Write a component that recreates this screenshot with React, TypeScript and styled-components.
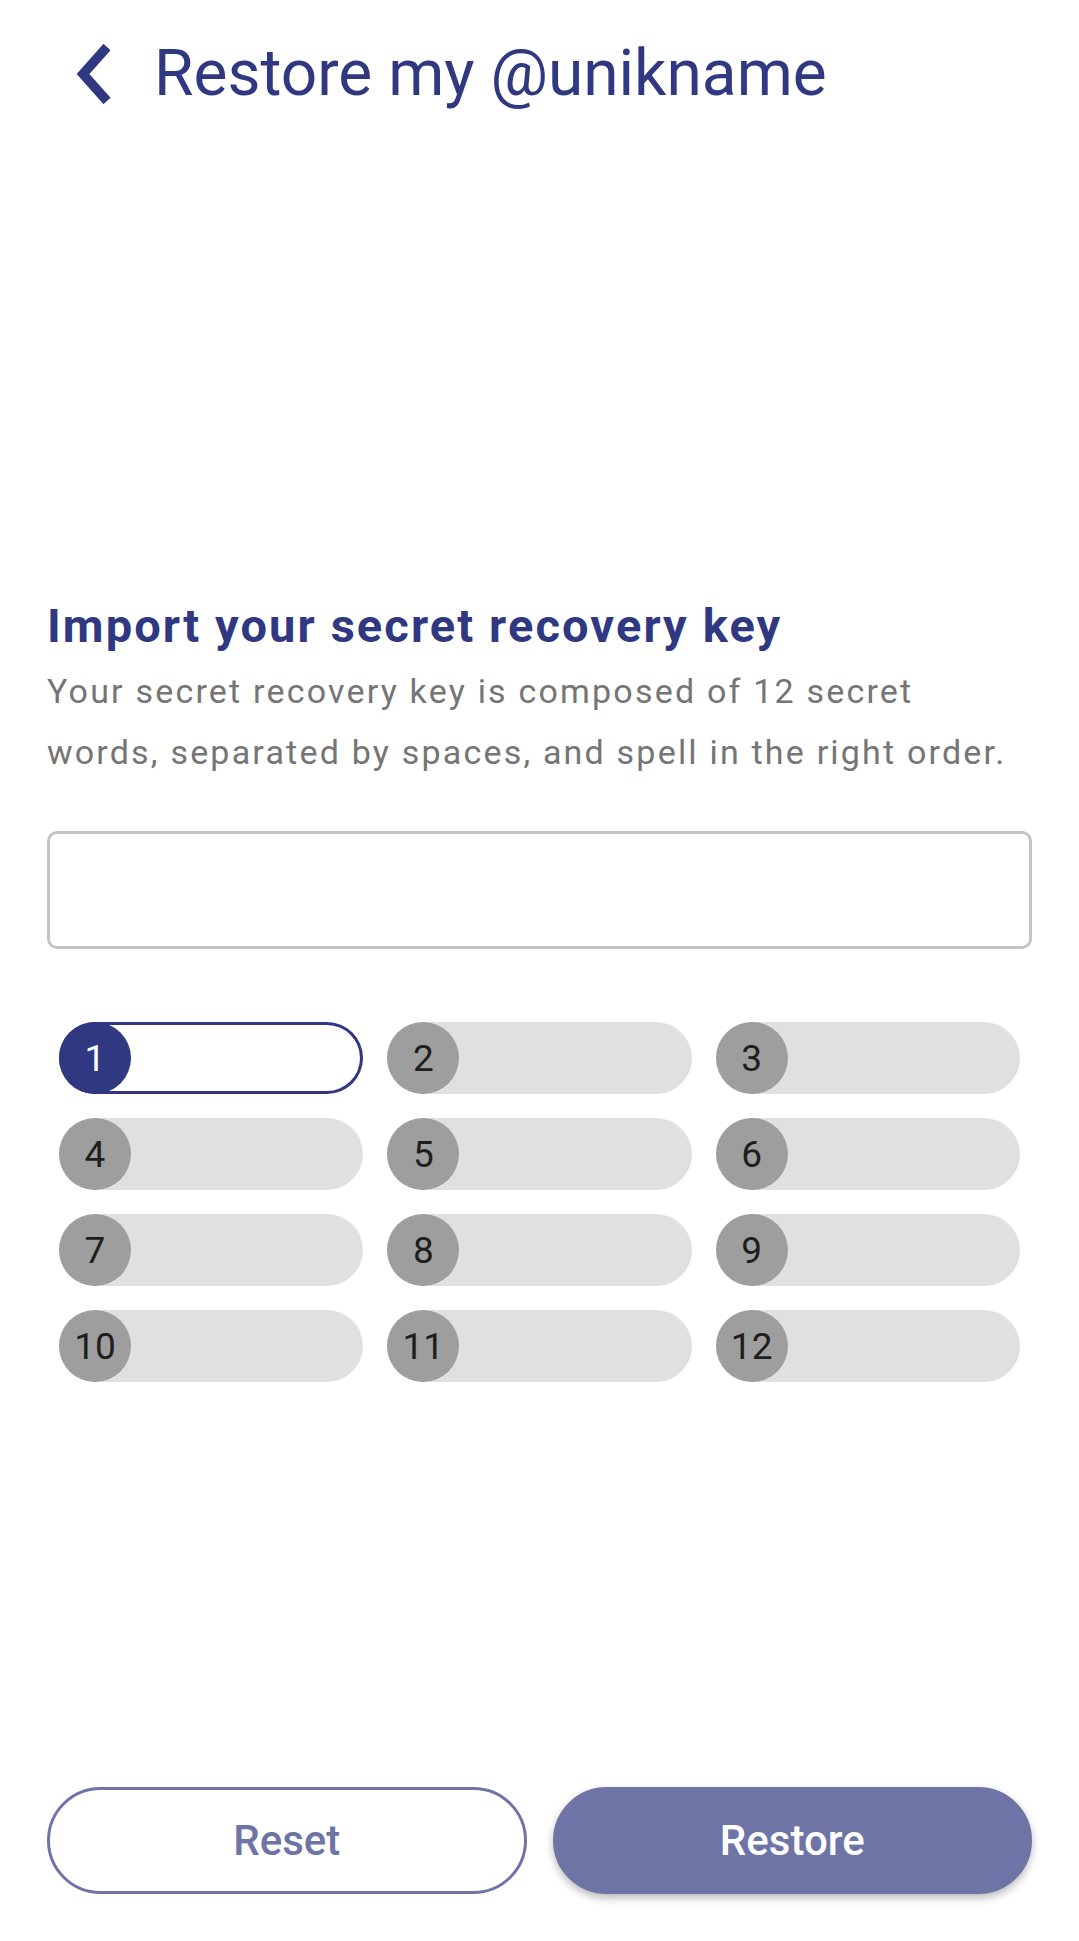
import React from "react";
import styled, { createGlobalStyle } from "styled-components";

const GlobalStyle = createGlobalStyle`
  html, body {
    margin: 0;
    padding: 0;
    background: #ffffff;
  }
  body {
    font-family: Roboto, "Noto Sans", "Liberation Sans", sans-serif;
  }
  * { box-sizing: border-box; }
`;

const NAVY = "#2f3881";
const MUTED = "#6e74a6";

const Screen = styled.div`
  min-height: 1941px;
  width: 1079px;
  display: flex;
  flex-direction: column;
  padding: 0 47px 47px 47px;
`;

const Header = styled.header`
  display: flex;
  align-items: center;
  padding-top: 36px;
  height: 111px;
`;

const BackButton = styled.button`
  display: flex;
  align-items: center;
  justify-content: center;
  width: 36px;
  height: 60px;
  margin-left: 29px;
  padding: 0;
  border: none;
  background: transparent;
  cursor: pointer;
`;

const Title = styled.h1`
  margin: 0 0 0 42px;
  font-size: 64px;
  line-height: 74px;
  font-weight: 400;
  color: ${NAVY};
`;

const Section = styled.section`
  display: flex;
  flex-direction: column;
  margin-top: 487px;
`;

const Heading = styled.h2`
  margin: 0;
  font-size: 47px;
  line-height: 56px;
  font-weight: 700;
  letter-spacing: 2.1px;
  color: ${NAVY};
`;

const Description = styled.p`
  margin: 7px 0 0 0;
  padding-right: 22px;
  font-size: 34px;
  line-height: 61px;
  letter-spacing: 2.2px;
  color: #757575;
`;

const PhraseBox = styled.textarea`
  margin-top: 48px;
  width: 100%;
  height: 118px;
  border: 3px solid #c4c4c4;
  border-radius: 10px;
  resize: none;
  outline: none;
  font: inherit;
  font-size: 34px;
  padding: 16px;
  background: #fff;
`;

const WordGrid = styled.div`
  margin-top: 73px;
  padding: 0 12px;
  display: grid;
  grid-template-columns: repeat(3, 1fr);
  column-gap: 24px;
  row-gap: 24px;
`;

const WordPill = styled.div<{ $active?: boolean }>`
  display: flex;
  align-items: center;
  height: 72px;
  border-radius: 36px;
  background: ${(p) => (p.$active ? "#ffffff" : "#e0e0e0")};
  box-shadow: ${(p) => (p.$active ? `inset 0 0 0 3px ${NAVY}` : "none")};
`;

const WordIndex = styled.span<{ $active?: boolean }>`
  flex: 0 0 72px;
  width: 72px;
  height: 72px;
  border-radius: 50%;
  display: flex;
  align-items: center;
  justify-content: center;
  background: ${(p) => (p.$active ? NAVY : "#9e9e9e")};
  color: ${(p) => (p.$active ? "#ffffff" : "#1e1e1e")};
  font-size: 37px;
  font-weight: 400;
  line-height: 1;
`;

const Actions = styled.div`
  margin-top: auto;
  display: grid;
  grid-template-columns: 1fr 1fr;
  column-gap: 26px;
`;

const ActionButton = styled.button<{ $primary?: boolean }>`
  height: 107px;
  border-radius: 54px;
  font-family: Roboto, "Noto Sans", sans-serif;
  font-size: 42px;
  font-weight: 500;
  cursor: pointer;
  border: 3px solid ${MUTED};
  background: ${(p) => (p.$primary ? MUTED : "#ffffff")};
  color: ${(p) => (p.$primary ? "#ffffff" : MUTED)};
  box-shadow: ${(p) => (p.$primary ? "0 4px 9px rgba(0,0,0,0.28)" : "none")};
`;

const Chevron = () => (
  <svg width="36" height="60" viewBox="0 0 36 60" aria-hidden="true">
    <path d="M31 3 L7 30 L31 57" fill="none" stroke={NAVY} strokeWidth="9.5" strokeLinecap="butt" strokeLinejoin="miter" />
  </svg>
);

export default function App() {
  const words = Array.from({ length: 12 }, (_, i) => i + 1);
  return (
    <>
      <GlobalStyle />
      <Screen>
        <Header>
          <BackButton aria-label="Back">
            <Chevron />
          </BackButton>
          <Title>Restore my @unikname</Title>
        </Header>
        <Section>
          <Heading>Import your secret recovery key</Heading>
          <Description>
            Your secret recovery key is composed of 12 secret words, separated by spaces, and spell in the right order.
          </Description>
          <PhraseBox aria-label="Secret recovery key" />
          <WordGrid>
            {words.map((n) => (
              <WordPill key={n} $active={n === 1}>
                <WordIndex $active={n === 1}>{n}</WordIndex>
              </WordPill>
            ))}
          </WordGrid>
        </Section>
        <Actions>
          <ActionButton>Reset</ActionButton>
          <ActionButton $primary>Restore</ActionButton>
        </Actions>
      </Screen>
    </>
  );
}
